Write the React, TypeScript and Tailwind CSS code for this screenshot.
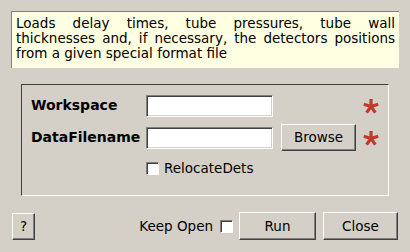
const sunken =
  'border border-t-[#808080] border-l-[#808080] border-b-white border-r-white shadow-[inset_1px_1px_0_#404040,inset_-1px_-1px_0_#d4d0c8] bg-white'
const raised =
  'border border-t-white border-l-white border-b-[#404040] border-r-[#404040] shadow-[inset_-1px_-1px_0_#808080] bg-[#d4d0c8]'

const Star = () => (
  <svg width="16" height="16" viewBox="0 0 16 16" className="shrink-0">
    <g stroke="#c0392b" strokeWidth="3.2" strokeLinecap="butt">
      <line x1="8" y1="8.5" x2="8" y2="1" />
      <line x1="8" y1="8.5" x2="15.2" y2="6.2" />
      <line x1="8" y1="8.5" x2="12.4" y2="14.6" />
      <line x1="8" y1="8.5" x2="3.6" y2="14.6" />
      <line x1="8" y1="8.5" x2="0.8" y2="6.2" />
    </g>
  </svg>
)

const Check = () => (
  <span className="block w-[13px] h-[13px] border border-t-[#808080] border-l-[#808080] border-b-white border-r-white shadow-[inset_1px_1px_0_#404040] bg-white shrink-0" />
)

export default function App() {
  return (
    <div className="w-[410px] h-[252px] bg-[#d4d0c8] font-['DejaVu_Sans',sans-serif] text-[13.5px] text-black pt-[11px] px-[11px]">
      <div className="h-[57px] border-t border-l border-[#808080] bg-[#ffffe1] px-[4px] pt-[4px] leading-[15px]">
        <div className="text-justify [text-align-last:justify]">Loads delay times, tube pressures, tube wall</div>
        <div className="text-justify [text-align-last:justify]">thicknesses and, if necessary, the detectors positions</div>
        <div>from a given special format file</div>
      </div>

      <div className="mt-[16px] ml-[10px] w-[368px] h-[112px] border border-t-[#404040] border-l-[#404040] border-b-white border-r-white pl-[9px] pt-[7px]">
        <div className="flex items-center h-[27px]">
          <span className="w-[115px] font-bold text-[14px]">Workspace</span>
          <div className={`w-[127px] h-[22px] ${sunken}`} />
          <div className="w-[83px]" />
          <div className="ml-[7px]">
            <Star />
          </div>
        </div>
        <div className="flex items-center h-[27px] mt-[5px]">
          <span className="w-[115px] font-bold text-[14px]">DataFilename</span>
          <div className={`w-[127px] h-[22px] ${sunken}`} />
          <button className={`ml-[8px] w-[75px] h-[27px] ${raised}`}>Browse</button>
          <div className="ml-[7px]">
            <Star />
          </div>
        </div>
        <div className="flex items-center h-[20px] mt-[7px] pl-[115px] gap-[5px]">
          <Check />
          <span>RelocateDets</span>
        </div>
      </div>

      <div className="mt-[16px] ml-[1px] mr-[1px] flex items-center h-[28px]">
        <button className={`w-[23px] h-[27px] ${raised}`}>?</button>
        <div className="flex-1" />
        <span>Keep Open</span>
        <div className="ml-[7px]">
          <Check />
        </div>
        <button className={`ml-[6px] w-[77px] h-[28px] ${raised}`}>Run</button>
        <button className={`ml-[7px] w-[75px] h-[28px] ${raised}`}>Close</button>
      </div>
    </div>
  )
}
